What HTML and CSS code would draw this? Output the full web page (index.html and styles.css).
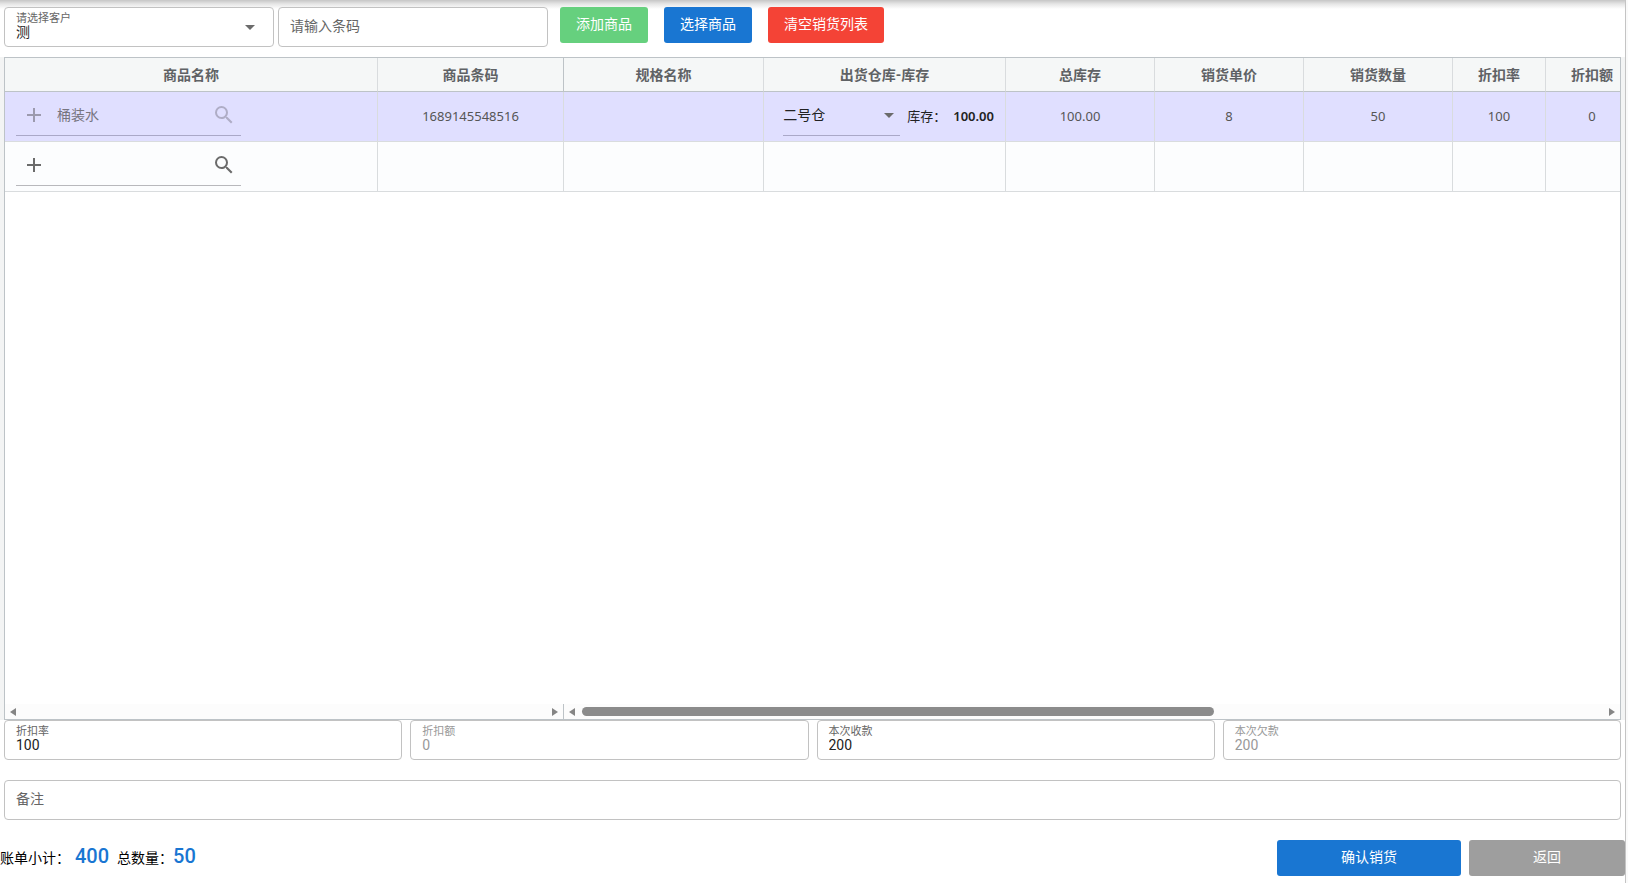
FILE: index.html
```html
<!DOCTYPE html>
<html lang="zh-CN">
<head>
<meta charset="utf-8">
<title>销货</title>
<link rel="stylesheet" href="styles.css">
</head>
<body>
<main class="page">
  <header class="toolbar">
    <div class="field picker">
      <label for="customer">请选择客户</label>
      <select id="customer"><option>测</option></select>
      <svg class="caret" viewBox="0 0 10 5" aria-hidden="true"><path d="M0 0h10L5 5z"/></svg>
    </div>
    <div class="field picker"><input id="barcode" type="text" placeholder="请输入条码" aria-label="请输入条码"></div>
    <div class="actions">
      <button class="btn green" type="button">添加商品</button>
      <button class="btn blue" type="button">选择商品</button>
      <button class="btn red" type="button">清空销货列表</button>
    </div>
  </header>

  <section class="grid-wrap">
    <div class="grid">
      <div class="viewport">
        <table>
          <colgroup>
            <col class="c-name"><col class="c-code"><col class="c-spec"><col class="c-store">
            <col class="c-num"><col class="c-num"><col class="c-num"><col class="c-rate"><col class="c-rate">
          </colgroup>
          <thead>
            <tr><th>商品名称</th><th class="pin">商品条码</th><th>规格名称</th><th>出货仓库-库存</th><th>总库存</th><th>销货单价</th><th>销货数量</th><th>折扣率</th><th>折扣额</th></tr>
          </thead>
          <tbody>
            <tr class="selected">
              <td>
                <div class="lookup off">
                  <button type="button" disabled aria-label="新增"><svg class="plus" viewBox="0 0 14 14"><path d="M6 0h2v6h6v2H8v6H6V8H0V6h6z"/></svg></button>
                  <input type="text" value="桶装水" disabled aria-label="商品名称">
                  <button type="button" disabled aria-label="搜索"><svg class="lens" viewBox="3 3 18 18"><path d="M15.5 14h-.79l-.28-.27A6.47 6.47 0 0 0 16 9.5 6.5 6.5 0 1 0 9.5 16c1.61 0 3.09-.59 4.23-1.57l.27.28v.79l5 4.99L20.49 19l-4.99-5zm-6 0C7.01 14 5 11.99 5 9.5S7.01 5 9.5 5 14 7.01 14 9.5 11.99 14 9.5 14z"/></svg></button>
                </div>
              </td>
              <td>1689145548516</td><td></td>
              <td>
                <div class="stock">
                  <div class="store">
                    <select aria-label="出货仓库"><option>二号仓</option></select>
                    <svg class="caret" viewBox="0 0 10 5" aria-hidden="true"><path d="M0 0h10L5 5z"/></svg>
                  </div>
                  <span>库存：</span><b>100.00</b>
                </div>
              </td>
              <td>100.00</td><td>8</td><td>50</td><td>100</td><td>0</td>
            </tr>
            <tr>
              <td>
                <div class="lookup">
                  <button type="button" aria-label="新增"><svg class="plus" viewBox="0 0 14 14"><path d="M6 0h2v6h6v2H8v6H6V8H0V6h6z"/></svg></button>
                  <input type="text" aria-label="商品名称">
                  <button type="button" aria-label="搜索"><svg class="lens" viewBox="3 3 18 18"><path d="M15.5 14h-.79l-.28-.27A6.47 6.47 0 0 0 16 9.5 6.5 6.5 0 1 0 9.5 16c1.61 0 3.09-.59 4.23-1.57l.27.28v.79l5 4.99L20.49 19l-4.99-5zm-6 0C7.01 14 5 11.99 5 9.5S7.01 5 9.5 5 14 7.01 14 9.5 11.99 14 9.5 14z"/></svg></button>
                </div>
              </td>
              <td></td><td></td><td></td><td></td><td></td><td></td><td></td><td></td>
            </tr>
          </tbody>
        </table>
      </div>
      <div class="scrolls" aria-hidden="true">
        <div class="scroll pinned">
          <svg viewBox="0 0 6 8"><path d="M6 0v8L0 4z"/></svg>
          <div class="track"></div>
          <svg viewBox="0 0 6 8"><path d="M0 0v8l6-4z"/></svg>
        </div>
        <div class="scroll">
          <svg viewBox="0 0 6 8"><path d="M6 0v8L0 4z"/></svg>
          <div class="track"><div class="thumb"></div></div>
          <svg viewBox="0 0 6 8"><path d="M0 0v8l6-4z"/></svg>
        </div>
      </div>
    </div>
  </section>

  <section class="totals">
    <div class="field"><label for="rate">折扣率</label><input id="rate" type="text" value="100"></div>
    <div class="field off"><label for="amount">折扣额</label><input id="amount" type="text" value="0" disabled></div>
    <div class="field"><label for="paid">本次收款</label><input id="paid" type="text" value="200"></div>
    <div class="field off"><label for="owed">本次欠款</label><input id="owed" type="text" value="200" disabled></div>
  </section>
  <section class="remark">
    <div class="field"><input id="remark" type="text" placeholder="备注" aria-label="备注"></div>
  </section>

  <footer class="footer">
    <p class="summary"><span class="subtotal">账单小计：</span><strong>400</strong><span>总数量：</span><strong>50</strong></p>
    <button class="btn blue confirm" type="button">确认销货</button>
    <button class="btn grey back" type="button">返回</button>
  </footer>
</main>
</body>
</html>
```
FILE: styles.css
```css
* { box-sizing: border-box; }
body {
  margin: 0;
  background: #fafafa;
  color: #000;
  font: 14px/20px Roboto, "Noto Sans CJK SC", sans-serif;
}
button, input, select { font: inherit; color: inherit; }
input, select {
  min-width: 0;
  padding: 0;
  border: 0;
  outline: 0;
  background: transparent;
  appearance: none;
}
.page {
  display: flex;
  flex-direction: column;
  min-height: 100vh;
  margin-right: 2px;
  padding-bottom: 7px;
  border-right: 1px solid #c4c4c4;
  background: linear-gradient(#c6c6c6, #e6e6e6 4px, #fff 9px);
}

.toolbar { display: flex; gap: 4px; padding: 7px 4px 10px; }
.field {
  position: relative;
  display: flex;
  flex-direction: column;
  flex: 1;
  height: 40px;
  padding: 4px 11px;
  border: 1px solid #c2c2c2;
  border-radius: 4px;
  background: #fff;
}
.field label { font-size: 11px; line-height: 13px; color: #666; }
.field input, .field select { width: 100%; height: 14px; line-height: 14px; color: #222; }
.field input:only-child { height: 28px; }
.field input::placeholder { color: #666; opacity: 1; }
.off label, .field.off input { color: #999; }
.picker { flex: 0 0 270px; }
.caret { width: 10px; height: 5px; fill: #6b6b6b; pointer-events: none; }
.picker .caret { position: absolute; right: 18px; top: 17px; }
.actions { display: flex; gap: 16px; padding-left: 8px; }
.btn {
  height: 36px;
  padding: 0 16px 2px;
  border: 0;
  border-radius: 3px;
  color: #fff;
}
.green { background: #66d07e; }
.blue { background: #1976d2; }
.red { background: #f44336; }
.grey { background: #9e9e9e; }

.grid-wrap { display: flex; flex: 1; padding: 0 4px; background: #f3f4f4; }
.grid {
  display: flex;
  flex-direction: column;
  flex: 1;
  min-width: 0;
  border: 1px solid #bdc3c7;
  background: #fff;
}
.viewport { flex: 1; overflow: hidden; }
table { width: 1634px; table-layout: fixed; border-collapse: separate; border-spacing: 0; }
.c-name { width: 373px; }
.c-code { width: 186px; }
.c-spec { width: 200px; }
.c-store { width: 242px; }
.c-num { width: 149px; }
.c-rate { width: 93px; }
th {
  height: 34px;
  padding: 0;
  border-right: 1px solid #d9dcde;
  border-bottom: 1px solid #bdc3c7;
  background: #f5f7f7;
  color: #5f6265;
  font-weight: 700;
}
th.pin { border-right-color: #bdc3c7; }
td {
  height: 50px;
  padding: 0 11px 2px;
  border-right: 1px solid #d9dcde;
  border-bottom: 1px solid #d9dcde;
  background: #fcfdfe;
  color: #555;
  font: 13px/20px "Noto Sans", "Noto Sans CJK SC", sans-serif;
  text-align: center;
}
.selected td { background: #e0dfff; }
.lookup {
  display: flex;
  align-items: center;
  width: 225px;
  height: 40px;
  border-bottom: 1px solid #b8b8bc;
}
.lookup button {
  display: flex;
  justify-content: center;
  align-items: center;
  width: 35px;
  height: 36px;
  padding: 0;
  border: 0;
  background: none;
}
.lookup input { flex: 1; padding-left: 6px; font-size: 14px; }
.lookup svg { fill: #6b6b6b; }
.lookup.off { color: #77757f; border-color: #aaa8c8; }
.lookup.off .plus { fill: #9c9aae; }
.lookup.off .lens { fill: #afadc6; }
.plus { width: 14px; height: 14px; }
.lens { width: 18px; height: 18px; }
.stock { display: flex; align-items: center; justify-content: flex-end; color: #222; }
.stock span { padding: 0 7px; }
.stock b { font-weight: 600; }
.store {
  display: flex;
  align-items: center;
  width: 117px;
  height: 40px;
  padding-right: 6px;
  border-bottom: 1px solid #aaa8c8;
}
.store select { flex: 1; font-size: 14px; }

.scrolls { display: flex; background: #fcfcfc; }
.scroll { display: flex; align-items: center; gap: 7px; flex: 1; height: 15px; padding: 0 5px; }
.scroll svg { width: 6px; height: 8px; fill: #858585; }
.pinned { flex: 0 0 559px; border-right: 1px solid #bdc3c7; }
.track { flex: 1; }
.thumb { width: 62%; height: 9px; border-radius: 5px; background: #8b8b8b; }

.totals { display: flex; gap: 8px; padding: 0 4px; }
.remark { display: flex; padding: 20px 4px; }
.footer { display: flex; align-items: center; gap: 8px; }
.summary { display: flex; align-items: baseline; flex: 1; margin: 0; padding-bottom: 2px; }
.subtotal { padding-right: 5px; }
.summary strong { padding-right: 8px; color: #1976d2; font-size: 20px; font-weight: 500; }
.confirm { width: 184px; }
.back { width: 156px; }
```
